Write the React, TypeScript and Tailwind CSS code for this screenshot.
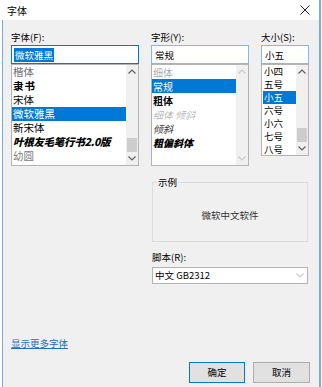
import React from "react";

const ui = "font-['Noto_Sans_CJK_SC','Microsoft_YaHei',sans-serif]";

const fontItems = [
  { name: "楷体", cls: "text-[#6e6e6e]" },
  { name: "隶书", cls: "font-bold text-[9.5px] tracking-[1px]" },
  { name: "宋体", cls: "" },
  { name: "微软雅黑", cls: "", selected: true },
  { name: "新宋体", cls: "" },
  { name: "叶根友毛笔行书2.0版", cls: "font-black italic tracking-[-0.3px]" },
  { name: "幼圆", cls: "text-[#7a7a7a]" },
];

const styleItems = [
  { name: "细体", cls: "text-[#8a8a8a] font-light" },
  { name: "常规", cls: "", selected: true },
  { name: "粗体", cls: "font-bold" },
  { name: "细体 倾斜", cls: "text-[#9a9a9a] italic font-light" },
  { name: "倾斜", cls: "italic text-[#333]" },
  { name: "粗偏斜体", cls: "font-black italic" },
];

const sizeItems = [
  { name: "小四" },
  { name: "五号" },
  { name: "小五", selected: true },
  { name: "六号" },
  { name: "小六" },
  { name: "七号" },
  { name: "八号" },
];

function Chevron({ up, disabled }: { up?: boolean; disabled?: boolean }) {
  return (
    <svg width="8" height="5" viewBox="0 0 8 5">
      <polyline
        points={up ? "0.5,4.5 4,1 7.5,4.5" : "0.5,0.5 4,4 7.5,0.5"}
        fill="none"
        stroke={disabled ? "#c8c8c8" : "#5a5a5a"}
        strokeWidth="1.1"
      />
    </svg>
  );
}

function ScrollBar({ thumb, disabled }: { thumb?: boolean; disabled?: boolean }) {
  return (
    <div className="w-[12px] h-full bg-[#f0f0f0] flex flex-col shrink-0">
      <div className="h-[13px] flex items-center justify-center">
        <Chevron up disabled={disabled} />
      </div>
      <div className="flex-1 flex flex-col justify-end">
        {thumb && <div className="h-[14px] mx-[1px] bg-[#cdcdcd]" />}
      </div>
      <div className="h-[13px] flex items-center justify-center">
        <Chevron disabled={disabled} />
      </div>
    </div>
  );
}

function Field({ value, focused, selected }: { value: string; focused?: boolean; selected?: boolean }) {
  return (
    <div
      className={`h-[19px] bg-white border flex items-center pl-[2px] ${
        focused ? "border-[#0078d7]" : "border-[#86b8e8]"
      }`}
    >
      <span className={`leading-[14px] px-[1px] ${selected ? "bg-[#0078d7] text-white" : ""}`}>
        {value}
      </span>
    </div>
  );
}

export default function App() {
  return (
    <div className={`w-[322px] h-[387px] bg-white text-[9.5px] text-black overflow-hidden ${ui}`}>

      {/* title bar */}
      <div className="w-[321px] h-[20px] flex items-center justify-between pl-[7px] pr-[9px] border-r-2 border-[#78acdf]">
        <span className="text-[10px]">字体</span>
        <svg width="10" height="10" viewBox="0 0 10 10">
          <path d="M0.5 0.5 L9.5 9.5 M9.5 0.5 L0.5 9.5" stroke="#222" strokeWidth="1" />
        </svg>
      </div>

      {/* body */}
      <div className="ml-[2px] w-[319px] h-[367px] bg-[#f0f0f0] border-l border-r-2 border-[#78acdf] flex flex-col pl-[8px] pr-[9px] pt-[10px]">

        <div className="flex gap-[12px]">

          {/* font */}
          <div className="w-[128px]">
            <div className="h-[14px] leading-[14px] mb-[1px]">字体(F):</div>
            <Field value="微软雅黑" focused selected />
            <div className="h-[102px] bg-white border border-[#b4b4b4] flex">
              <div className="flex-1 flex flex-col">
                {fontItems.map((f) => (
                  <div
                    key={f.name}
                    className={`h-[14px] flex items-center pl-[1px] text-[10.5px] whitespace-nowrap overflow-hidden ${
                      f.selected ? "bg-[#0078d7] text-white" : ""
                    } ${f.cls}`}
                  >
                    {f.name}
                  </div>
                ))}
              </div>
              <ScrollBar thumb />
            </div>
          </div>

          {/* right area */}
          <div className="w-[158px] flex flex-col">
            <div className="flex gap-[12px]">

              <div className="w-[98px]">
                <div className="h-[14px] leading-[14px] mb-[1px]">字形(Y):</div>
                <Field value="常规" />
                <div className="h-[102px] bg-white border border-[#b4b4b4] flex">
                  <div className="flex-1 flex flex-col">
                    {styleItems.map((s) => (
                      <div
                        key={s.name}
                        className={`h-[14px] flex items-center pl-[1px] text-[10px] whitespace-nowrap ${
                          s.selected ? "bg-[#0078d7] text-white" : ""
                        } ${s.cls}`}
                      >
                        {s.name}
                      </div>
                    ))}
                  </div>
                  <ScrollBar disabled />
                </div>
              </div>

              <div className="w-[48px]">
                <div className="h-[14px] leading-[14px] mb-[1px]">大小(S):</div>
                <Field value="小五" />
                <div className="h-[92px] bg-white border border-[#b4b4b4] flex">
                  <div className="flex-1 flex flex-col pl-[1px]">
                    {sizeItems.map((s) => (
                      <div
                        key={s.name}
                        className={`h-[13px] flex items-center pl-[1px] text-[9.5px] ${
                          s.selected ? "bg-[#0078d7] text-white" : ""
                        }`}
                      >
                        {s.name}
                      </div>
                    ))}
                  </div>
                  <ScrollBar thumb />
                </div>
              </div>

            </div>

            {/* sample */}
            <fieldset className="mt-[9px] ml-[1px] w-[156px] border border-[#dcdcdc]">
              <legend className="ml-[4px] px-[1px] leading-[14px]">示例</legend>
              <div className="h-[52px] flex items-center justify-center text-[#333]">
                微软中文软件
              </div>
            </fieldset>

            <div className="ml-[1px] mt-[8px] h-[14px] leading-[14px]">脚本(R):</div>
            <div className="ml-[1px] mt-[3px] w-[156px] h-[17px] bg-white border border-[#b4b4b4] flex items-center justify-between pl-[2px] pr-[3px]">
              <span>中文 GB2312</span>
              <Chevron disabled />
            </div>
          </div>

        </div>

        <div className="mt-[52px] h-[14px] leading-[14px]">
          <span className="text-[#1a6fc9] underline">显示更多字体</span>
        </div>

        <div className="mt-[12px] flex justify-end gap-[8px]">
          <button className="w-[56px] h-[21px] bg-[#e1e1e1] border border-[#0078d7] text-[9.5px]">
            确定
          </button>
          <button className="w-[57px] h-[21px] bg-[#e1e1e1] border border-[#adadad] text-[9.5px]">
            取消
          </button>
        </div>

      </div>
    </div>
  );
}
